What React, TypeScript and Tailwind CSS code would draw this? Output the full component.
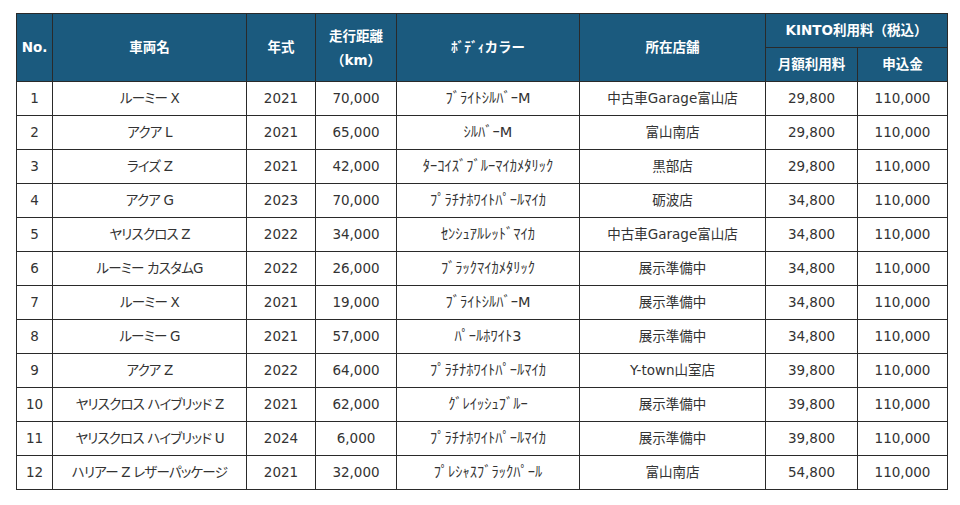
import React from "react";

const rows: [string, string, string, string, string, string, string, string][] = [
  ["1", "ルーミー X", "2021", "70,000", "ﾌﾞﾗｲﾄｼﾙﾊﾞｰM", "中古車Garage富山店", "29,800", "110,000"],
  ["2", "アクア L", "2021", "65,000", "ｼﾙﾊﾞｰM", "富山南店", "29,800", "110,000"],
  ["3", "ライズ Z", "2021", "42,000", "ﾀｰｺｲｽﾞﾌﾞﾙｰﾏｲｶﾒﾀﾘｯｸ", "黒部店", "29,800", "110,000"],
  ["4", "アクア G", "2023", "70,000", "ﾌﾟﾗﾁﾅﾎﾜｲﾄﾊﾟｰﾙﾏｲｶ", "砺波店", "34,800", "110,000"],
  ["5", "ヤリスクロス Z", "2022", "34,000", "ｾﾝｼｭｱﾙﾚｯﾄﾞﾏｲｶ", "中古車Garage富山店", "34,800", "110,000"],
  ["6", "ルーミー カスタムG", "2022", "26,000", "ﾌﾞﾗｯｸﾏｲｶﾒﾀﾘｯｸ", "展示準備中", "34,800", "110,000"],
  ["7", "ルーミー X", "2021", "19,000", "ﾌﾞﾗｲﾄｼﾙﾊﾞｰM", "展示準備中", "34,800", "110,000"],
  ["8", "ルーミー G", "2021", "57,000", "ﾊﾟｰﾙﾎﾜｲﾄ3", "展示準備中", "34,800", "110,000"],
  ["9", "アクア Z", "2022", "64,000", "ﾌﾟﾗﾁﾅﾎﾜｲﾄﾊﾟｰﾙﾏｲｶ", "Y-town山室店", "39,800", "110,000"],
  ["10", "ヤリスクロス ハイブリッド Z", "2021", "62,000", "ｸﾞﾚｲｯｼｭﾌﾞﾙｰ", "展示準備中", "39,800", "110,000"],
  ["11", "ヤリスクロス ハイブリッド U", "2024", "6,000", "ﾌﾟﾗﾁﾅﾎﾜｲﾄﾊﾟｰﾙﾏｲｶ", "展示準備中", "39,800", "110,000"],
  ["12", "ハリアー Z レザーパッケージ", "2021", "32,000", "ﾌﾟﾚｼｬｽﾌﾞﾗｯｸﾊﾟｰﾙ", "富山南店", "54,800", "110,000"],
];

const th =
  "border border-[#2a2a2a] bg-[#1b5a7e] text-white font-bold text-[13.5px] text-center align-middle p-0";
const td =
  "border border-[#2a2a2a] text-[#333333] text-[13.5px] text-center align-middle p-0 h-[34px] leading-none";

export default function App() {
  return (
    <div
      className="w-[960px] h-[505px] bg-white pt-[13px] pl-[16px]"
      style={{ fontFamily: '"DejaVu Sans", Verdana, "Noto Sans CJK JP", sans-serif' }}
    >
      <table className="border-collapse table-fixed w-[931px] border border-[#2a2a2a]">
        <colgroup>
          <col className="w-[36px]" />
          <col className="w-[194px]" />
          <col className="w-[69px]" />
          <col className="w-[81px]" />
          <col className="w-[183px]" />
          <col className="w-[186px]" />
          <col className="w-[92px]" />
          <col className="w-[90px]" />
        </colgroup>
        <thead>
          <tr className="h-[34px]">
            <th rowSpan={2} className={th}>No.</th>
            <th rowSpan={2} className={th}>車両名</th>
            <th rowSpan={2} className={th}>年式</th>
            <th rowSpan={2} className={`${th} leading-[24px]`}>
              走行距離<br />（km）
            </th>
            <th rowSpan={2} className={th}>ﾎﾞﾃﾞｨカラー</th>
            <th rowSpan={2} className={th}>所在店舗</th>
            <th colSpan={2} className={`${th} h-[34px]`}>KINTO利用料（税込）</th>
          </tr>
          <tr className="h-[34px]">
            <th className={`${th} h-[34px]`}>月額利用料</th>
            <th className={`${th} h-[34px]`}>申込金</th>
          </tr>
        </thead>
        <tbody>
          {rows.map((r) => (
            <tr key={r[0]}>
              {r.map((c, i) => (
                <td
                  key={i}
                  className={`${td} ${
                    i === 1
                      ? "[font-feature-settings:'palt'] tracking-[-0.8px]"
                      : i === 4
                      ? "text-[14.5px]"
                      : ""
                  }`}
                >
                  {c}
                </td>
              ))}
            </tr>
          ))}
        </tbody>
      </table>
    </div>
  );
}
